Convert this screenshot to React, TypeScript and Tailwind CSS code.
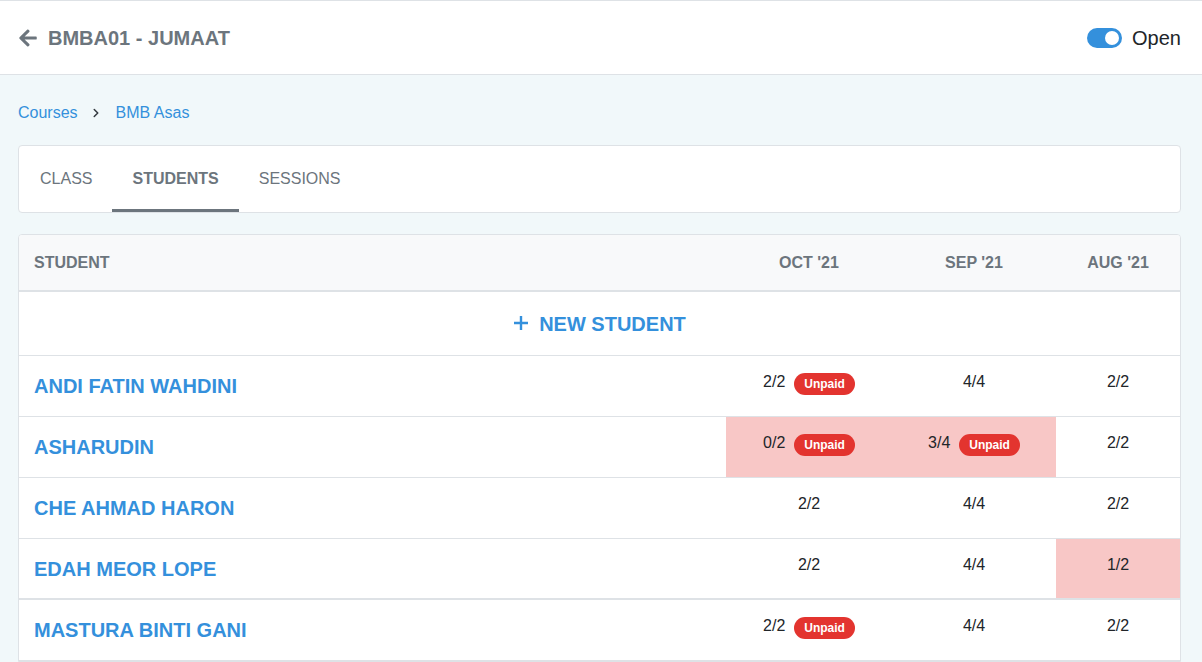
import { ChevronRight } from "lucide-react";
import { FaArrowLeft } from "react-icons/fa";

type Cell = { count: string; unpaid?: boolean; short?: boolean };

type Student = {
  name: string;
  months: Cell[];
  thick?: boolean;
};

const students: Student[] = [
  {
    name: "ANDI FATIN WAHDINI",
    months: [{ count: "2/2", unpaid: true }, { count: "4/4" }, { count: "2/2" }],
  },
  {
    name: "ASHARUDIN",
    months: [
      { count: "0/2", unpaid: true, short: true },
      { count: "3/4", unpaid: true, short: true },
      { count: "2/2" },
    ],
  },
  {
    name: "CHE AHMAD HARON",
    months: [{ count: "2/2" }, { count: "4/4" }, { count: "2/2" }],
  },
  {
    name: "EDAH MEOR LOPE",
    months: [{ count: "2/2" }, { count: "4/4" }, { count: "1/2", short: true }],
    thick: true,
  },
  {
    name: "MASTURA BINTI GANI",
    months: [{ count: "2/2", unpaid: true }, { count: "4/4" }, { count: "2/2" }],
  },
];

const tabs = ["CLASS", "STUDENTS", "SESSIONS"];

function MonthCell({ cell }: { cell: Cell }) {
  return (
    <div
      className={`flex h-full items-start justify-center gap-[9px] pt-[14px] ${
        cell.short ? "bg-[#f8c7c6]" : ""
      }`}
    >
      <span className="text-[16px] leading-6 text-[#212529]">{cell.count}</span>
      {cell.unpaid && (
        <span className="mt-[3px] inline-flex h-[22px] items-center rounded-full bg-[#e3342f] px-[10px] text-[12px] font-bold text-white">
          Unpaid
        </span>
      )}
    </div>
  );
}

export default function App() {
  return (
    <div className="min-h-screen border-t border-[#dee2e6] bg-[#f1f8fa] font-['Liberation_Sans',Arial,sans-serif]">
      <header className="flex h-[74px] items-center justify-between border-b border-[#dee2e6] bg-white pl-[18px] pr-[21px]">
        <div className="flex items-center gap-[10px] text-[#6c757d]">
          <FaArrowLeft className="h-[20px] w-[20px]" />
          <span className="text-[20px] font-bold">BMBA01 - JUMAAT</span>
        </div>
        <div className="flex items-center gap-[10px]">
          <div className="flex h-[20px] w-[35px] items-center justify-end rounded-full bg-[#3490dc] pr-[3px]">
            <div className="h-[14px] w-[14px] rounded-full bg-white" />
          </div>
          <span className="text-[20px] text-[#212529]">Open</span>
        </div>
      </header>

      <main className="pl-[18px] pr-[21px] pt-[26px]">
        <nav className="flex items-center text-[16px] leading-6 text-[#3490dc]">
          <span>Courses</span>
          <ChevronRight
            className="ml-[11px] mr-[13px] h-[14px] w-[14px] text-[#343a40]"
            strokeWidth={2.6}
          />
          <span>BMB Asas</span>
        </nav>

        <div className="mt-[20px] flex h-[68px] items-stretch rounded border border-[#dee2e6] bg-white pl-px">
          {tabs.map((tab) => {
            const active = tab === "STUDENTS";
            return (
              <div
                key={tab}
                className={`flex items-center px-[20px] pt-[3px] text-[16px] ${
                  active
                    ? "border-b-[3px] border-[#6c757d] font-bold text-[#6c757d]"
                    : "border-b-[3px] border-transparent text-[#6c757d]"
                }`}
              >
                {tab}
              </div>
            );
          })}
        </div>

        <div className="mt-[21px] overflow-hidden rounded-t border border-[#dee2e6] bg-white">
          <div className="grid h-[57px] grid-cols-[1fr_166px_164px_124px] items-center border-b-2 border-[#dee2e6] bg-[#f8f9fa] text-[16px] font-bold text-[#6c757d]">
            <div className="pl-[15px]">STUDENT</div>
            <div className="text-center">OCT &apos;21</div>
            <div className="text-center">SEP &apos;21</div>
            <div className="text-center">AUG &apos;21</div>
          </div>

          <div className="flex h-[64px] items-center justify-center gap-[10px] border-b border-[#dee2e6] text-[20px] font-bold text-[#3490dc]">
            <svg width="16" height="16" viewBox="0 0 16 16" className="mt-[-1px]">
              <path d="M8 1v14M1 8h14" stroke="currentColor" strokeWidth="2.4" />
            </svg>
            <span>NEW STUDENT</span>
          </div>

          {students.map((s) => (
            <div
              key={s.name}
              className={`grid h-[61px] grid-cols-[1fr_166px_164px_124px] border-[#dee2e6] ${
                s.thick ? "border-b-2" : "border-b"
              }`}
            >
              <div className="flex items-center pl-[15px] text-[20px] font-bold text-[#3490dc]">
                {s.name}
              </div>
              {s.months.map((c, i) => (
                <MonthCell key={i} cell={c} />
              ))}
            </div>
          ))}
        </div>
      </main>
    </div>
  );
}
